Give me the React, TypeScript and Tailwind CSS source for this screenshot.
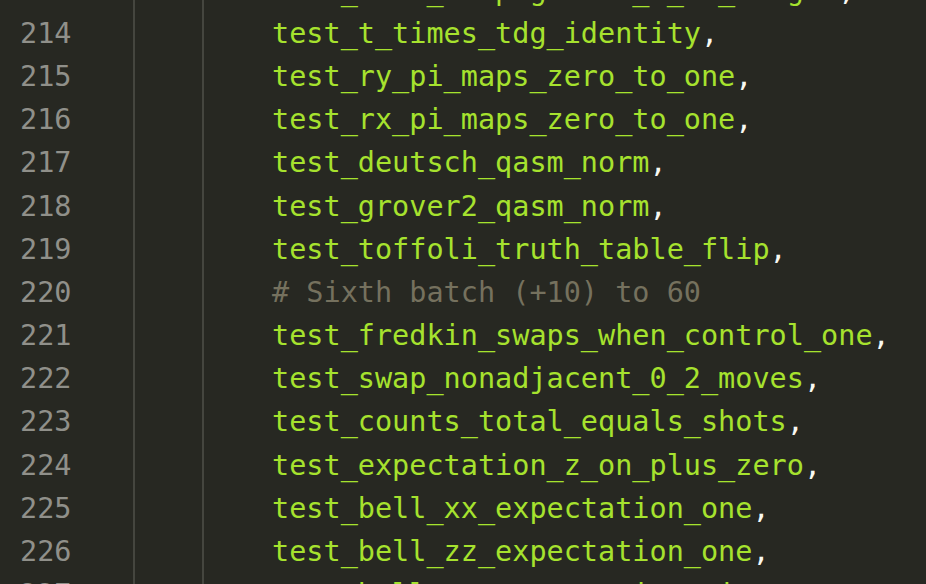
const lines: { n: number; text: string; comment?: boolean }[] = [
  { n: 213, text: 'test_cnot_flipsgatein_1_on_target' },
  { n: 214, text: 'test_t_times_tdg_identity' },
  { n: 215, text: 'test_ry_pi_maps_zero_to_one' },
  { n: 216, text: 'test_rx_pi_maps_zero_to_one' },
  { n: 217, text: 'test_deutsch_qasm_norm' },
  { n: 218, text: 'test_grover2_qasm_norm' },
  { n: 219, text: 'test_toffoli_truth_table_flip' },
  { n: 220, text: '# Sixth batch (+10) to 60', comment: true },
  { n: 221, text: 'test_fredkin_swaps_when_control_one' },
  { n: 222, text: 'test_swap_nonadjacent_0_2_moves' },
  { n: 223, text: 'test_counts_total_equals_shots' },
  { n: 224, text: 'test_expectation_z_on_plus_zero' },
  { n: 225, text: 'test_bell_xx_expectation_one' },
  { n: 226, text: 'test_bell_zz_expectation_one' },
  { n: 227, text: 'test_bell_yy_expectation_minus_one' },
];

export default function App() {
  return (
    <div
      className="w-[926px] h-[584px] overflow-hidden bg-[#272822] text-[28.5px] leading-[43.17px]"
      style={{ fontFamily: '"DejaVu Sans Mono", "Liberation Mono", monospace' }}
    >
      <div className="flex mt-[-31.3px]">
        {/* Gutter */}
        <div className="w-[135px] shrink-0 border-r-2 border-[#45463f] pl-[20px] text-[#90908a]">
          {lines.map((l) => (
            <div key={l.n} className="whitespace-pre">
              {l.n}
            </div>
          ))}
        </div>

        {/* Indent guide */}
        <div className="w-[69px] shrink-0 border-r-2 border-[#45463f]" />

        {/* Code */}
        <div className="pl-[68px]">
          {lines.map((l) => (
            <div key={l.n} className="whitespace-pre">
              {l.comment ? (
                <span className="text-[#75715e]">{l.text}</span>
              ) : (
                <>
                  <span className="text-[#a6e22e]">{l.text}</span>
                  <span className="text-[#f8f8f2]">,</span>
                </>
              )}
            </div>
          ))}
        </div>
      </div>
    </div>
  );
}
